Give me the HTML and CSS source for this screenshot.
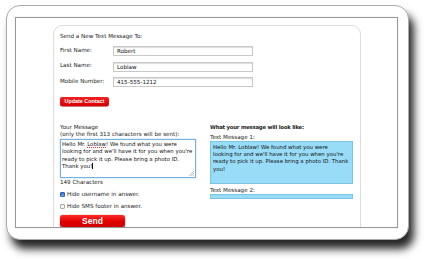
FILE: index.html
```html
<!DOCTYPE html>
<html>
<head>
<meta charset="utf-8">
<link rel="stylesheet" href="styles.css">
</head>
<body>
<div class="frame">
  <div class="screen">
    <div class="card">
      <div class="title">Send a New Text Message To:</div>
      <div class="contact">
        <label>First Name:</label><div class="field">Robert</div>
        <label>Last Name:</label><div class="field">Loblaw</div>
        <label>Mobile Number:</label><div class="field">415-555-1212</div>
      </div>
      <button class="btn-update">Update Contact</button>
      <div class="cols">
        <div class="col-left">
          <div class="lbl">Your Message<br>(only the first 313 characters will be sent):</div>
          <div class="textarea">Hello Mr. <span class="spell">Loblaw</span>! We found what you were<br>looking for and we'll have it for you when you're<br>ready to pick it up. Please bring a photo ID.<br>Thank you!<span class="caret"></span>
            <svg class="grip" width="6" height="6" viewBox="0 0 6 6"><path d="M1 6L6 1M3 6L6 3M5 6L6 5" stroke="#999" stroke-width="0.6"/></svg>
          </div>
          <div class="count">149 Characters</div>
          <div class="check"><span class="box on"><svg width="5" height="5" viewBox="0 0 5 5"><path d="M1 2.6L2.1 3.8L4.2 1" stroke="#fff" stroke-width="0.9" fill="none"/></svg></span>Hide username in answer.</div>
          <div class="check"><span class="box"></span>Hide SMS footer in answer.</div>
          <button class="btn-send">Send</button>
        </div>
        <div class="col-right">
          <div class="head">What your message will look like:</div>
          <div class="lbl2">Text Message 1:</div>
          <div class="sms">Hello Mr. Loblaw! We found what you were<br>looking for and we'll have it for you when you're<br>ready to pick it up. Please bring a photo ID. Thank<br>you!</div>
          <div class="lbl2">Text Message 2:</div>
          <div class="sms empty"></div>
        </div>
      </div>
    </div>
  </div>
</div>
</body>
</html>
```
FILE: styles.css
```css
* { box-sizing: border-box; }
html, body { margin: 0; padding: 0; background: #fff; }
body {
  font-family: "DejaVu Sans", Verdana, sans-serif;
  font-size: 5.6px;
  color: #222;
  width: 425px;
  height: 260px;
  overflow: hidden;
}
.frame {
  margin: 5px 0 0 6px;
  width: 403px;
  height: 235px;
  border: 1px solid #aaa;
  border-radius: 14px;
  background: #fff;
  box-shadow: 5px 9px 8px rgba(0,0,0,0.85);
  padding: 11px 10px 0 8px;
}
.screen {
  width: 383px;
  height: 211px;
  border: 1px solid #999;
  box-shadow: 0 0 1px #ccc;
  padding: 7px 0 0 37px;
  overflow: hidden;
}
.card {
  width: 308px;
  height: 220px;
  border: 1px solid #ddd;
  border-radius: 9px 9px 0 0;
  padding: 7px 6px 0 6px;
}
.title { line-height: 7px; margin-bottom: 6px; }
.contact {
  display: grid;
  grid-template-columns: 53px 140px;
  row-gap: 5.5px;
  align-items: center;
}
.contact label { line-height: 7px; position: relative; top: -1px; }
.field {
  height: 10px;
  border: 1px solid #c8c8c8;
  box-shadow: inset 0 1px 1px #ddd;
  padding: 0 3px;
  line-height: 8px;
  color: #111;
}
.btn-update {
  display: block;
  margin-top: 10px;
  width: 49px;
  height: 8.5px;
  padding: 0;
  border: none;
  border-radius: 2px;
  background: linear-gradient(#f42020, #d80000);
  color: #fff;
  font-family: "Liberation Sans", Arial, sans-serif;
  font-weight: bold;
  font-size: 5.4px;
  line-height: 8.5px;
  box-shadow: 0 0.5px 0.5px #900;
}
.cols {
  display: flex;
  gap: 14px;
  margin-top: 18px;
}
.col-left { width: 136px; }
.col-right { width: 143px; }
.lbl { line-height: 7.5px; }
.textarea {
  position: relative;
  height: 39px;
  border: 1px solid #7cb0e0;
  box-shadow: 0 0 1.5px #9cc8f0;
  padding: 1px 1px;
  line-height: 7.6px;
  color: #111;
  white-space: nowrap;
  font-size: 5.4px;
}
.spell { text-decoration: underline dotted #e33; text-underline-offset: 1px; }
.caret { display: inline-block; width: 0.6px; height: 6px; background: #111; vertical-align: -1px; }
.grip { position: absolute; right: 1px; bottom: 1px; }
.count { line-height: 7px; margin-top: 1px; }
.check {
  display: flex;
  align-items: center;
  gap: 2px;
  line-height: 7px;
  margin-top: 5px;
}
.box {
  width: 5px;
  height: 5px;
  border: 0.6px solid #aaa;
  border-radius: 1px;
  background: #f4f4f4;
  display: inline-flex;
}
.box.on { background: #3c7fd6; border-color: #2a62b0; }
.btn-send {
  display: block;
  margin-top: 5px;
  width: 65px;
  height: 12px;
  padding: 0;
  border: none;
  border-radius: 3px;
  background: linear-gradient(#ff2a2a, #e00000 55%, #d00000);
  color: #fff;
  font-family: "Liberation Sans", Arial, sans-serif;
  font-weight: bold;
  font-size: 8.5px;
  line-height: 12px;
  box-shadow: 0 0.5px 1px #800;
}
.head { font-weight: bold; line-height: 7px; font-size: 5.3px; letter-spacing: -0.2px; }
.lbl2 { line-height: 7px; margin-top: 3px; }
.sms {
  background: #99dcf8;
  border: 1px solid #7cc4e4;
  height: 43px;
  padding: 2px 2px;
  line-height: 7.4px;
  color: #111;
  white-space: nowrap;
  font-size: 5.4px;
}
.sms.empty { height: 5px; padding: 0; }
```
